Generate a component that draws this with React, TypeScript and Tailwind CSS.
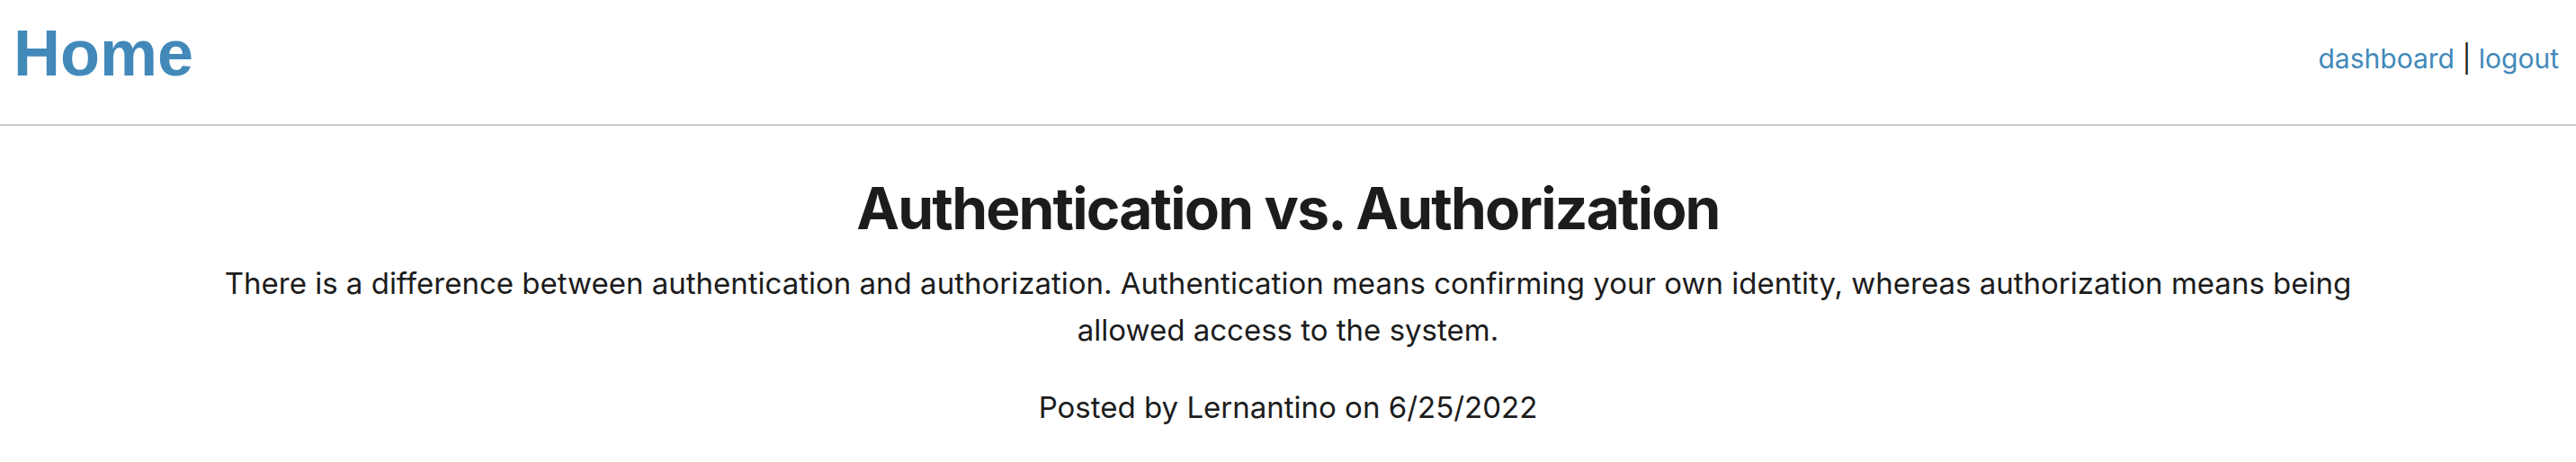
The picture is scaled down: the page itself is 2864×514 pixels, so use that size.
export default function App() {
  return (
    <div className="min-h-screen bg-white text-[#1c1c1c]" style={{ fontFamily: "Inter, 'Noto Sans', sans-serif" }}>
      <header className="flex items-start justify-between border-b-2 border-[#cccccc] px-[15px] pt-[18px] h-[140px]">
        <h1 className="font-['Liberation_Sans',Arial,sans-serif] text-[72px] font-bold leading-[83px] text-[#4289ba]">Home</h1>
        <nav className="mt-[27px] pr-[4px] text-[30px] leading-[40px]">
          <a href="#" className="text-[#4289ba]">dashboard</a>
          <span> | </span>
          <a href="#" className="text-[#4289ba]">logout</a>
        </nav>
      </header>
      <main className="px-[240px] text-center">
        <h2 className="mt-[53px] text-[64px] font-bold leading-[77px] tracking-[-1.8px]">Authentication vs. Authorization</h2>
        <p className="mt-[19px] text-[33px] leading-[52px]">
          There is a difference between authentication and authorization. Authentication means confirming your own identity, whereas authorization means being allowed access to the system.
        </p>
        <p className="mt-[34px] text-[33px] leading-[52px]">Posted by Lernantino on 6/25/2022</p>
      </main>
    </div>
  );
}
